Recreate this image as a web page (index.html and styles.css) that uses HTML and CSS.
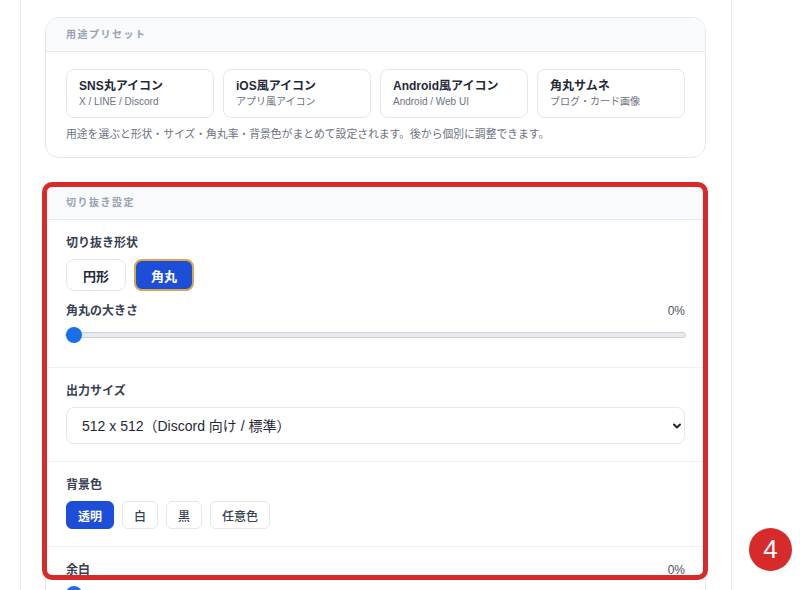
FILE: index.html
```html
<!DOCTYPE html>
<html lang="ja">
<head>
  <meta charset="UTF-8">
  <title>アイコン切り抜き – 設定</title>
  <meta name="viewport" content="width=device-width, initial-scale=1">
  <link rel="stylesheet" href="styles.css">
</head>
<body>
  <div class="stage">
    <div class="panel">

      <section class="card">
        <div class="card-head">用途プリセット</div>
        <div class="card-body">
          <div class="presets">
            <button class="preset">
              <span class="preset-title">SNS丸アイコン</span>
              <span class="preset-sub">X / LINE / Discord</span>
            </button>
            <button class="preset">
              <span class="preset-title">iOS風アイコン</span>
              <span class="preset-sub">アプリ風アイコン</span>
            </button>
            <button class="preset">
              <span class="preset-title">Android風アイコン</span>
              <span class="preset-sub">Android / Web UI</span>
            </button>
            <button class="preset">
              <span class="preset-title">角丸サムネ</span>
              <span class="preset-sub">ブログ・カード画像</span>
            </button>
          </div>
          <p class="note">用途を選ぶと形状・サイズ・角丸率・背景色がまとめて設定されます。後から個別に調整できます。</p>
        </div>
      </section>

      <section class="card crop">
        <div class="card-head">切り抜き設定</div>

        <div class="field">
          <div class="label">切り抜き形状</div>
          <div class="toggles">
            <button class="shape">円形</button>
            <button class="shape active">角丸</button>
          </div>
          <div class="label-row">
            <span class="label">角丸の大きさ</span>
            <span class="value">0%</span>
          </div>
          <input type="range" class="slider" min="0" max="50" value="0">
        </div>

        <div class="field">
          <div class="label">出力サイズ</div>
          <div class="select-wrap">
            <select class="select">
              <option>512 x 512（Discord 向け / 標準）</option>
              <option>256 x 256</option>
              <option>1024 x 1024</option>
            </select>
            <svg class="chevron" width="10" height="10" viewBox="0 0 10 10">
              <path d="M2 3.5 L5 6.5 L8 3.5" fill="none" stroke="#222" stroke-width="2" stroke-linecap="round" stroke-linejoin="round"/>
            </svg>
          </div>
        </div>

        <div class="field">
          <div class="label">背景色</div>
          <div class="chips">
            <button class="chip active">透明</button>
            <button class="chip">白</button>
            <button class="chip">黒</button>
            <button class="chip">任意色</button>
          </div>
        </div>

        <div class="field">
          <div class="label-row first">
            <span class="label">余白</span>
            <span class="value">0%</span>
          </div>
          <input type="range" class="slider" min="0" max="40" value="0">
        </div>

        <div class="highlight"></div>
      </section>

    </div>
    <div class="step-badge">4</div>
  </div>
</body>
</html>
```

FILE: styles.css
```css
body {
  margin: 0;
  background: #fff;
  font-family: 'Liberation Sans', 'Noto Sans CJK JP', sans-serif;
  color: #1f2937;
  overflow: hidden;
}
button, select {
  font-family: inherit;
}
.stage {
  position: relative;
  height: 590px;
}
.panel {
  margin-left: 20px;
  width: 712px;
  box-sizing: border-box;
  padding: 17px 25px 0 24px;
  border-left: 1px solid #ebebeb;
  border-right: 1px solid #ebebeb;
  min-height: 590px;
}
.card {
  background: #fff;
  border: 1px solid #e3e7ec;
  border-radius: 14px;
  margin-bottom: 27px;
}
.card-head {
  height: 33px;
  line-height: 33px;
  padding: 0 20px;
  background: #f8fafc;
  border-bottom: 1px solid #e6eaef;
  border-radius: 13px 13px 0 0;
  font-size: 10px;
  font-weight: 700;
  letter-spacing: 1.5px;
  color: #97a1b0;
}
.card-body {
  padding: 17px 20px 15px;
}
.presets {
  display: grid;
  grid-template-columns: repeat(4, 1fr);
  gap: 9px;
}
.preset {
  display: flex;
  flex-direction: column;
  align-items: flex-start;
  padding: 7px 12px 8px;
  background: #fff;
  border: 1px solid #e5e7eb;
  border-radius: 8px;
  text-align: left;
  cursor: pointer;
}
.preset-title {
  font-size: 12px;
  font-weight: 700;
  line-height: 18px;
  color: #1f2937;
}
.preset-sub {
  font-size: 10px;
  line-height: 14px;
  color: #6b7280;
}
.note {
  margin: 8px 0 0;
  font-size: 10.8px;
  line-height: 16px;
  color: #6b7280;
}

/* crop settings */
.crop {
  position: relative;
}
.field {
  padding: 15px 20px 17px;
}
.field + .field {
  border-top: 1px solid #eceff3;
}
.label {
  display: block;
  font-size: 12px;
  font-weight: 700;
  line-height: 16px;
  color: #374151;
  margin-bottom: 8px;
}
.label-row {
  display: flex;
  justify-content: space-between;
  align-items: center;
  margin-top: 12px;
}
.label-row.first { margin-top: 0; }
.label-row .label { margin-bottom: 0; }
.value {
  font-size: 12px;
  line-height: 16px;
  color: #4b5563;
}
.toggles, .chips {
  display: flex;
  gap: 8px;
}
.shape {
  height: 32px;
  padding: 0 16px;
  background: #fff;
  border: 1px solid #e5e7eb;
  border-radius: 8px;
  font-size: 13px;
  font-weight: 700;
  color: #1f2937;
  cursor: pointer;
}
.shape.active {
  background: #1d4ed8;
  border: 2px solid #d9a64c;
  color: #fff;
  padding: 0 15px;
}
.slider {
  -webkit-appearance: none;
  appearance: none;
  display: block;
  width: calc(100% + 2px);
  height: 16px;
  margin: 8px 0 7px -1px;
  background: transparent;
}
.slider::-webkit-slider-runnable-track {
  height: 6px;
  background: #e8eaed;
  border: 1px solid #cdd2d8;
  border-radius: 4px;
}
.slider::-webkit-slider-thumb {
  -webkit-appearance: none;
  width: 16px;
  height: 16px;
  margin-top: -6px;
  border: none;
  border-radius: 50%;
  background: #1a6fe8;
}
.select-wrap {
  position: relative;
}
.select {
  -webkit-appearance: none;
  appearance: none;
  width: 100%;
  height: 37px;
  padding: 0 15px;
  background: #fff;
  border: 1px solid #e5e7eb;
  border-radius: 8px;
  font-size: 14px;
  color: #1f2937;
}
.chevron {
  position: absolute;
  right: 3px;
  top: 14px;
  pointer-events: none;
}
.chip {
  height: 28px;
  padding: 0 11px;
  background: #fff;
  border: 1px solid #e5e7eb;
  border-radius: 6px;
  font-size: 12px;
  font-weight: 500;
  color: #374151;
  cursor: pointer;
}
.chip.active {
  background: #1d4ed8;
  border-color: #1d4ed8;
  color: #fff;
  font-weight: 700;
}

/* annotation overlay */
.highlight {
  position: absolute;
  top: -4px;
  left: -4px;
  right: -3px;
  height: 398px;
  box-sizing: border-box;
  border: 5px solid #d72a2a;
  border-radius: 10px;
  pointer-events: none;
}
.step-badge {
  position: absolute;
  left: 749px;
  top: 528px;
  width: 43px;
  height: 43px;
  border-radius: 50%;
  background: #d72a2a;
  color: #fff;
  font-family: 'Liberation Sans', sans-serif;
  font-size: 26px;
  line-height: 43px;
  text-align: center;
}
```
